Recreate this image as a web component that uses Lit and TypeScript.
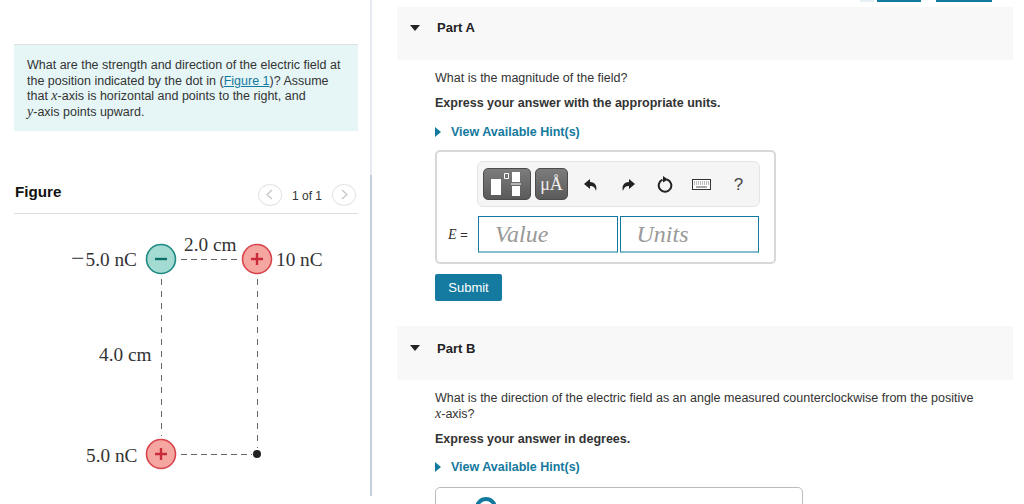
import { LitElement, html, css, svg } from "lit";
import { customElement } from "lit/decorators.js";

@customElement("app-root")
export class AppRoot extends LitElement {
  static styles = css`
    :host { display: block; width: 1024px; height: 504px; overflow: hidden; background: #fff; font-family: "Liberation Sans", Arial, sans-serif; color: #333; position: relative; }
    .page { display: flex; height: 504px; }
    .left { width: 370px; height: 496px; flex: none; box-sizing: border-box; padding: 44px 12px 0 14px; }
    .rail { width: 2px; height: 496px; flex: none; background: linear-gradient(#e6ebf3 0 175px, #c4cede 175px); }
    .problem { box-sizing: border-box; height: 87px; background: #e6f6f7; border-top: 1px solid #dde3e3; padding: 13px 12px 0 13px; font-size: 12.5px; line-height: 15.5px; color: #333; }
    .problem a { color: #14799e; text-decoration: underline; }
    .m { font-family: "Liberation Serif", serif; font-style: italic; font-size: 14px; line-height: 10px; }
    .fighead { display: flex; align-items: center; margin-top: 49px; height: 33px; border-bottom: 1px solid #ddd; }
    .fighead h2 { font-size: 15.2px; margin: 0 0 11px 1px; color: #111; font-weight: bold; flex: 1; }
    .pager { display: flex; align-items: center; gap: 10px; font-size: 12px; color: #333; margin: 0 2px 4px 0; }
    .pager span { margin-top: 2px; }
    .circle { width: 24px; height: 22px; border: 1px solid #e4e4e4; border-radius: 50%; display: flex; align-items: center; justify-content: center; box-sizing: border-box; }
    .diagram { display: block; margin: 11px 0 0 44px; }
    .right { flex: 1; padding: 7px 11px 0 25px; min-width: 0; }
    .part { display: flex; align-items: flex-start; background: #f8f8f8; height: 53px; font-size: 13px; font-weight: bold; color: #222; }
    .part.b { margin-top: 25px; height: 54px; }
    .part svg { margin: 18px 17px 0 13px; flex: none; }
    .part.b svg { margin-top: 19px; }
    .part span { margin-top: 13px; }
    .part.b span { margin-top: 15px; }
    .body { padding: 11px 0 0 38px; }
    .q { font-size: 12.5px; line-height: 15.5px; margin: 0; color: #333; }
    .inst { font-size: 12.5px; font-weight: bold; line-height: 15.5px; margin: 9px 0 0; color: #333; }
    .hint { display: flex; align-items: center; gap: 10px; font-size: 12.5px; font-weight: bold; color: #14799e; margin-top: 13px; line-height: 16px; }
    .answer { box-sizing: border-box; margin-top: 10px; width: 341px; height: 114px; border: 2px solid #d8d8d8; border-radius: 5px; padding: 9px 15px 0 40px; }
    .toolbar { box-sizing: border-box; height: 46px; width: 283px; background: #f5f5f5; border: 1px solid #e4e4e4; border-radius: 6px; display: flex; align-items: center; padding: 0 0 0 5px; }
    .tb { box-sizing: border-box; height: 32px; background: linear-gradient(#7c7c7c, #5a5a5a); border: 1px solid #4b4b4b; border-radius: 5px; display: flex; align-items: center; justify-content: center; color: #fff; }
    .tb.t { width: 48px; margin-right: 4px; }
    .tb.u { width: 33px; font-family: "Liberation Serif", serif; font-size: 18px; color: #eee; }
    .tool { display: grid; grid-template-columns: repeat(5, 37px); justify-items: center; align-items: center; margin: 1px 0 0 4px; color: #444; font-size: 17px; }
    .row { display: flex; align-items: center; margin: 9px 0 0 -31px; }
    .eq { width: 32px; flex: none; font-size: 13px; white-space: nowrap; color: #333; padding-left: 2px; box-sizing: border-box; }
    .fld { box-sizing: border-box; flex: none; width: 139.5px; height: 37px; margin-right: 2px; border: 1px solid #14799e; border-bottom: 2px solid #86bccb; font-family: "Liberation Serif", serif; font-style: italic; font-size: 24px; color: #999; padding: 2px 0 0 16px; line-height: 30px; }
    .submit { box-sizing: border-box; width: 67px; height: 27px; margin-top: 10px; background: #147a9f; border-radius: 2px; color: #fff; font-size: 13px; display: flex; align-items: center; justify-content: center; }
    .bbody { padding-top: 11px; }
    .bbody .inst { margin-top: 10px; }
    .bbody .hint { margin-top: 11px; }
    .box2 { position: relative; box-sizing: border-box; margin-top: 12px; width: 368px; height: 40px; border: 1px solid #bbb; border-radius: 5px 5px 0 0; overflow: hidden; }
    .arc { position: absolute; left: 39px; top: 9px; width: 14px; height: 14px; border: 4px solid #14799e; border-radius: 50%; }
    .top { position: absolute; top: 0; left: 860px; display: flex; gap: 3px; }
    .top i { display: block; height: 2px; background: #14799e; }
    .top i.p { width: 14px; background: #e6f0f4; }
    .top i.a { width: 44px; }
    .top i.c { width: 56px; margin-left: 12px; }
  `;

  private charge(x: number, y: number, neg: boolean) {
    const fill = neg ? "#a3dbd2" : "#f6a6a0";
    const stroke = neg ? "#1f8a83" : "#d8434c";
    const sign = neg ? "#0d6e68" : "#c92b3a";
    return svg`<circle cx=${x} cy=${y} r="14.5" fill=${fill} stroke=${stroke} stroke-width="1.6"></circle>
      <path d=${neg ? `M${x - 6} ${y}h12` : `M${x - 6} ${y}h12M${x} ${y - 6}v12`} stroke=${sign} stroke-width="2.4" fill="none"></path>`;
  }

  private diagram() {
    return html`<svg class="diagram" width="290" height="250" viewBox="58 225 290 250">
      <g stroke="#666" stroke-width="1" stroke-dasharray="6 4" fill="none">
        <path d="M181 259.500H238"></path>
        <path d="M181 454.500H252"></path>
      </g>
      <g stroke="#666" stroke-width="1" stroke-dasharray="6 6" fill="none">
        <path d="M161.500 279V436"></path>
        <path d="M257.500 279V448"></path>
      </g>
      ${this.charge(161, 259, true)}${this.charge(257, 259, false)}${this.charge(161, 454, false)}
      <circle cx="257" cy="454" r="4" fill="#222"></circle>
      <g font-family="Liberation Serif, serif" font-size="19.3" fill="#333">
        <text x="71" y="266"><tspan font-size="24">−</tspan><tspan dx="1">5.0 nC</tspan></text>
        <text x="184" y="251">2.0 cm</text>
        <text x="276" y="266">10 nC</text>
        <text x="99" y="360.500">4.0 cm</text>
        <text x="86" y="461.500">5.0 nC</text>
      </g>
    </svg>`;
  }

  private tri() {
    return html`<svg width="10" height="6" viewBox="0 0 10 6"><path d="M0 0H10L5 6Z" fill="#222"></path></svg>`;
  }
  private hintTri() {
    return html`<svg width="6" height="10" viewBox="0 0 6 10"><path d="M0 0L6 5L0 10Z" fill="#14799e"></path></svg>`;
  }

  render() {
    return html`<div class="page">
      <div class="left">
        <div class="problem">What are the strength and direction of the electric field at the position indicated by the dot in (<a>Figure 1</a>)? Assume<br>that <span class="m">x</span>-axis is horizontal and points to the right, and<br><span class="m">y</span>-axis points upward.</div>
        <div class="fighead">
          <h2>Figure</h2>
          <div class="pager">
            <div class="circle"><svg width="7" height="11" viewBox="0 0 7 11"><path d="M6 1L1 5.500L6 10" fill="none" stroke="#c4c4c4" stroke-width="1.200"></path></svg></div>
            <span>1 of 1</span>
            <div class="circle"><svg width="7" height="11" viewBox="0 0 7 11"><path d="M1 1L6 5.500L1 10" fill="none" stroke="#c4c4c4" stroke-width="1.200"></path></svg></div>
          </div>
        </div>
        ${this.diagram()}
      </div>
      <div class="rail"></div>
      <div class="right">
        <div class="part">${this.tri()}<span>Part A</span></div>
        <div class="body">
          <p class="q">What is the magnitude of the field?</p>
          <p class="inst">Express your answer with the appropriate units.</p>
          <div class="hint">${this.hintTri()}<span>View Available Hint(s)</span></div>
          <div class="answer">
            <div class="toolbar">
              <div class="tb t"><svg width="32" height="24" viewBox="0 0 32 24"><path d="M0 7h10v16H0z" fill="#fff"></path><path d="M13.500 1.500h4v5h-4z" fill="none" stroke="#fff"></path><path d="M21 0h8v10h-8zM21 14h8v10h-8z" fill="#fff"></path><path d="M20 12h10" stroke="#fff"></path></svg></div>
              <div class="tb u">μÅ</div>
              <div class="tool">
                <svg width="14" height="14" viewBox="0 0 14 14"><path d="M6 1L0 6L6 11V8C9 8 11 9 12 13C13.500 8 11 4 6 4Z" fill="#222"></path></svg>
                <svg width="14" height="14" viewBox="0 0 14 14"><path d="M8 1L14 6L8 11V8C5 8 3 9 2 13C.5 8 3 4 8 4Z" fill="#222"></path></svg>
                <svg width="16" height="17" viewBox="0 0 16 17"><path d="M5.500 3.700A6.300 6.300 0 1 0 10 3.500" fill="none" stroke="#222" stroke-width="2"></path><path d="M6 0L11 3.500L6 6.500Z" fill="#222"></path></svg>
                <svg width="19" height="11" viewBox="0 0 19 11"><rect x=".5" y=".5" width="18" height="10" fill="#fff" stroke="#333"></rect><path d="M2 3h15M2 5h15" stroke="#777" stroke-dasharray="1 1"></path><path d="M4 8h11" stroke="#555"></path></svg>
                <span>?</span>
              </div>
            </div>
            <div class="row">
              <div class="eq"><span class="m">E</span> =</div>
              <div class="fld">Value</div>
              <div class="fld">Units</div>
            </div>
          </div>
          <div class="submit">Submit</div>
        </div>
        <div class="part b">${this.tri()}<span>Part B</span></div>
        <div class="body bbody">
          <p class="q">What is the direction of the electric field as an angle measured counterclockwise from the positive<br><span class="m">x</span>-axis?</p>
          <p class="inst">Express your answer in degrees.</p>
          <div class="hint">${this.hintTri()}<span>View Available Hint(s)</span></div>
          <div class="box2"><div class="arc"></div></div>
        </div>
      </div>
    </div>
    <div class="top"><i class="p"></i><i class="a"></i><i class="c"></i></div>`;
  }
}
